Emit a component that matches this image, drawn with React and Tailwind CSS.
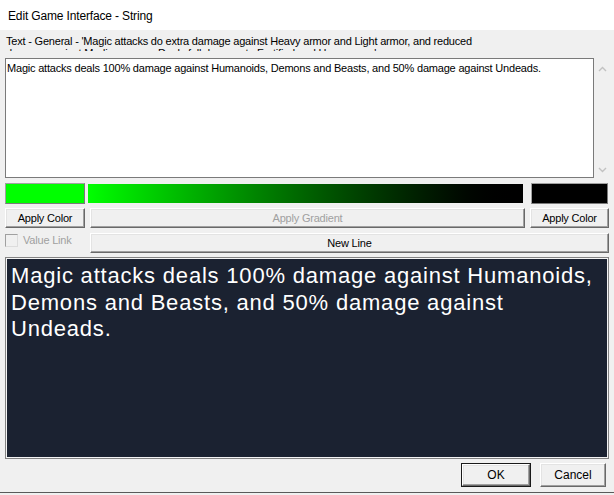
import React from "react";

const BTN =
  "flex items-center justify-center bg-[#f0f0f0] border border-t-white border-l-white border-b-[#696969] border-r-[#696969] shadow-[inset_-1px_-1px_0_#a0a0a0,inset_1px_1px_0_#e3e3e3]";

function Chevron({ up }) {
  return (
    <svg width="9" height="6" viewBox="0 0 9 6">
      <polyline
        points={up ? "1,5 4.5,1.5 8,5" : "1,1 4.5,4.5 8,1"}
        fill="none"
        stroke="#c2c2c2"
        strokeWidth="1.4"
      />
    </svg>
  );
}

export default function App() {
  return (
    <div className="w-[614px] h-[495px] bg-[#f0f0f0] flex flex-col font-['Liberation_Sans',Arial,sans-serif] text-black overflow-hidden">
      {/* Title bar */}
      <div className="h-[30px] bg-white flex items-center pl-[8px] pt-[2px] text-[12px] tracking-[-0.15px] text-black">
        Edit Game Interface - String
      </div>

      <div className="ml-[5px] w-[604px] flex flex-col">
        {/* Label */}
        <div className="mt-[5px] h-[16px] overflow-hidden text-[11px] leading-[12px] tracking-[-0.2px] pl-[1px]">
          Text - General - 'Magic attacks do extra damage against Heavy armor and Light armor, and reduced
          <br />
          damage against Medium armor. Deals full damage to Fortified and Hero armor.'
        </div>

        {/* Textarea */}
        <div className="mt-[7px] flex h-[120px]">
          <div className="w-[589px] h-full bg-white border border-[#7a7a7a] px-[1px] pt-[3px] text-[11px] leading-[13px] tracking-[-0.2px]">
            Magic attacks deals 100% damage against Humanoids, Demons and Beasts, and 50% damage against Undeads.
          </div>
          <div className="flex-1 flex flex-col items-center justify-between pt-[8px] pb-[5px] pl-[2px]">
            <Chevron up />
            <Chevron />
          </div>
        </div>

        {/* Color row */}
        <div className="mt-[5px] flex h-[21px] items-stretch">
          <div className="w-[80px] bg-[#00ff00] border border-t-[#a0a0a0] border-l-[#a0a0a0] border-b-[#7a7a7a] border-r-[#7a7a7a]" />
          <div className="ml-[3px] w-[435px] my-[1px] bg-gradient-to-r from-[#00ff00] to-[#000000]" />
          <div className="ml-[8px] w-[77px] bg-black border border-t-[#a0a0a0] border-l-[#a0a0a0] border-b-[#7a7a7a] border-r-[#7a7a7a]" />
        </div>

        {/* Buttons row */}
        <div className="mt-[4px] flex h-[20px] text-[11px] tracking-[-0.2px]">
          <div className={BTN + " w-[80px]"}>Apply Color</div>
          <div className={BTN + " ml-[5px] w-[435px] text-[#a0a0a0]"}>Apply Gradient</div>
          <div className={BTN + " ml-[5px] w-[79px]"}>Apply Color</div>
        </div>

        {/* Value link / New Line */}
        <div className="mt-[5px] flex h-[20px] text-[11px] tracking-[-0.2px]">
          <div className="w-[85px] flex items-start pt-[1px]">
            <div className="w-[13px] h-[13px] border border-t-[#a0a0a0] border-l-[#a0a0a0] border-b-[#dcdcdc] border-r-[#dcdcdc] bg-[#f0f0f0]" />
            <span className="ml-[5px] text-[#a0a0a0] leading-[13px]">Value Link</span>
          </div>
          <div className={BTN + " w-[519px]"}>New Line</div>
        </div>

        {/* Preview */}
        <div className="mt-[4px] h-[202px] bg-[#1b2231] border border-[#828282] shadow-[inset_0_0_0_1px_#f4f4f4] pl-[5px] pt-[5px] text-white text-[22px] leading-[26.5px] tracking-[0.8px]">
          Magic attacks deals 100% damage against Humanoids,
          <br />
          Demons and Beasts, and 50% damage against
          <br />
          Undeads.
        </div>

        {/* OK / Cancel */}
        <div className="mt-[4px] flex justify-end h-[24px] pr-[3px] text-[12px]">
          <div className="w-[70px] border border-[#1a1a1a] flex">
            <div className={BTN + " flex-1"}>OK</div>
          </div>
          <div className={BTN + " ml-[9px] w-[66px]"}>Cancel</div>
        </div>
      </div>

      <div className="mt-[5px] h-[1px] bg-[#5a5a5a]" />
    </div>
  );
}
